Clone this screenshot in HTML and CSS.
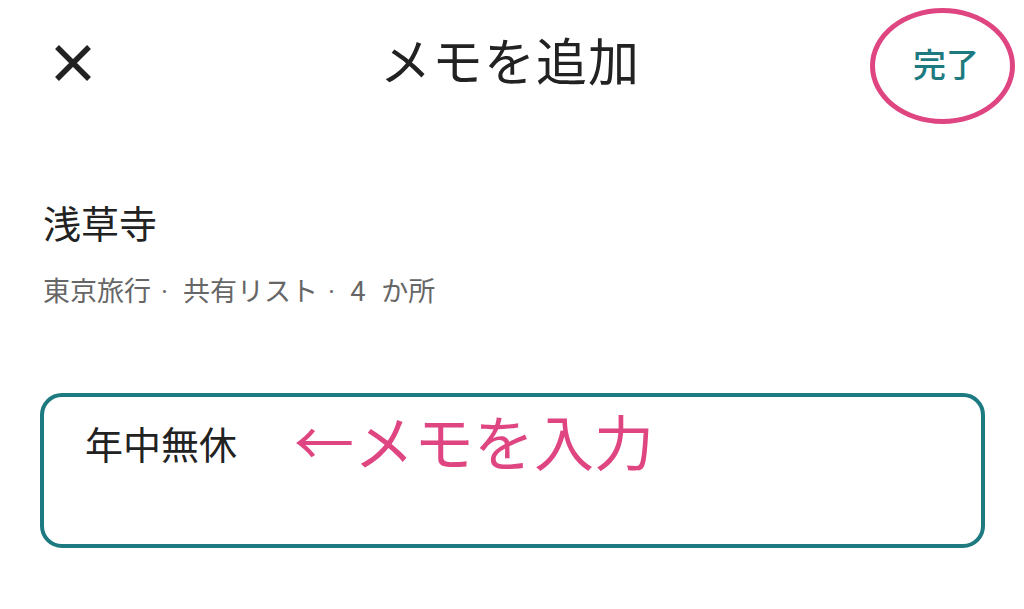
FILE: index.html
```html
<!DOCTYPE html>
<html lang="ja">
<head>
    <meta charset="UTF-8">
    <meta name="viewport" content="width=device-width, initial-scale=1.0">
    <title>メモを追加</title>
    <link rel="stylesheet" href="styles.css">
</head>
<body>
    <div class="header">
        <button class="close" aria-label="閉じる">
            <svg width="38" height="38" viewBox="0 0 38 38">
                <path d="M3 3 L35 35 M35 3 L3 35" stroke="#222" stroke-width="5.5" fill="none"/>
            </svg>
        </button>
        <h1>メモを追加</h1>
        <div class="done-wrap">
            <button class="done">完了</button>
            <span class="ring"></span>
        </div>
    </div>

    <div class="place">
        <h2>浅草寺</h2>
        <p class="meta">東京旅行<span class="sep">·</span>共有リスト<span class="sep">·</span><span class="count">4</span>か所</p>
    </div>

    <div class="memo">
        <span class="memo-text">年中無休</span>
        <span class="hint">←メモを入力</span>
    </div>
</body>
</html>
```

FILE: styles.css
```css
body {
    font-family: Roboto, "Noto Sans CJK JP", sans-serif;
    margin: 0;
    background: #fff;
    color: #222;
    width: 1024px;
    height: 609px;
    overflow: hidden;
}
button {
    background: none;
    border: none;
    padding: 0;
    font-family: inherit;
    cursor: pointer;
}
.header {
    display: flex;
    align-items: flex-start;
    justify-content: space-between;
    height: 128px;
    padding: 0 44px 0 54px;
}
.close {
    width: 38px;
    height: 38px;
    margin-top: 44px;
    display: flex;
}
h1 {
    margin: 22px 0 0 16px;
    font-size: 51px;
    font-weight: 400;
    letter-spacing: 1px;
}
.done-wrap {
    position: relative;
    width: 68px;
    margin-top: 39px;
    display: flex;
    justify-content: center;
}
.done {
    font-size: 33px;
    color: #1d7a80;
    font-weight: 500;
}
.ring {
    position: absolute;
    left: -42px;
    top: -31px;
    width: 135px;
    height: 106px;
    border: 5px solid #df4580;
    border-radius: 50%;
}
.place {
    padding: 71px 43px 0;
}
h2 {
    margin: 0;
    font-size: 38px;
    font-weight: 400;
    line-height: 52px;
}
.meta {
    margin: 23px 0 0;
    font-size: 27px;
    color: #666;
    line-height: 36px;
}
.sep {
    margin: 0 15px 0 10px;
}
.count {
    margin-right: 16px;
}
.memo {
    margin: 83px 39px 0 40px;
    height: 155px;
    box-sizing: border-box;
    border: 4px solid #1d7a80;
    border-radius: 22px;
    display: flex;
    align-items: flex-start;
    padding: 27px 41px 0;
}
.memo-text {
    font-size: 38px;
    line-height: 44px;
}
.hint {
    font-size: 60px;
    color: #df4580;
    line-height: 50px;
    margin-left: 57px;
    margin-top: -3px;
}
```
